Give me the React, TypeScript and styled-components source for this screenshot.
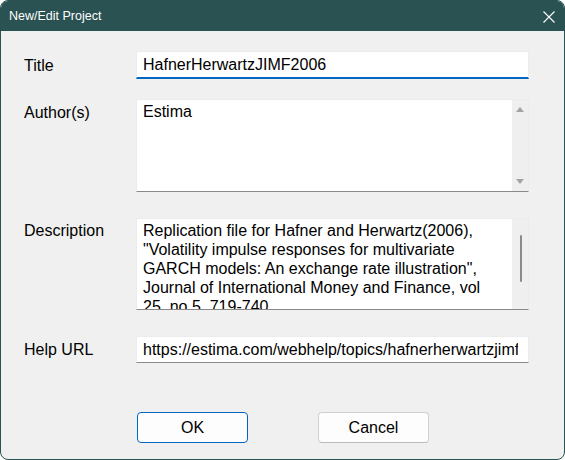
import styled, { createGlobalStyle } from 'styled-components'

const GlobalStyle = createGlobalStyle`
  html, body {
    margin: 0;
    padding: 0;
    background: #ffffff;
  }
  * {
    box-sizing: border-box;
  }
`

const SWindow = styled.div`
  width: 565px;
  height: 460px;
  border: 1px solid #2a5252;
  border-radius: 8px;
  overflow: hidden;
  background: #f0f0f0;
  display: flex;
  flex-direction: column;
  font-family: 'Liberation Sans', Arial, sans-serif;
  color: #000;
`

const STitleBar = styled.div`
  height: 30px;
  flex: none;
  background: #2a5252;
  display: flex;
  align-items: center;
  justify-content: space-between;
  padding: 0 9px 0 8px;
  color: #ffffff;
  font-size: 12.5px;
`

const SCloseIcon = styled.svg`
  width: 12px;
  height: 12px;
  display: block;
  margin-top: 1px;
`

const SBody = styled.div`
  flex: 1;
  padding: 20px 35px 0 23px;
  display: flex;
  flex-direction: column;
`

const SRow = styled.div<{ $gap: number; $center?: boolean }>`
  display: grid;
  grid-template-columns: 112px 1fr;
  align-items: ${(p) => (p.$center ? 'center' : 'start')};
  margin-top: ${(p) => p.$gap}px;
`

const SLabel = styled.div<{ $top?: number }>`
  font-size: 16px;
  line-height: 19px;
  padding-top: ${(p) => p.$top ?? 0}px;
`

const SLineInput = styled.input<{ $focused?: boolean; $right?: number }>`
  display: block;
  width: 100%;
  height: ${(p) => (p.$focused ? 28 : 27)}px;
  margin: 0;
  padding: 0 ${(p) => p.$right ?? 1}px 0 6px;
  border: 1px solid #ececec;
  border-bottom: ${(p) => (p.$focused ? '2px solid #0067c0' : '1px solid #8a8a8a')};
  background: #ffffff;
  font-family: 'Liberation Sans', Arial, sans-serif;
  font-size: 16px;
  line-height: 19px;
  color: #000;
  outline: none;
`

const SMultiBox = styled.div<{ $height: number }>`
  height: ${(p) => p.$height}px;
  display: flex;
  background: #ffffff;
  border: 1px solid #ececec;
  border-bottom: 1px solid #8a8a8a;
  overflow: hidden;
`

const SMultiText = styled.div<{ $right?: number }>`
  flex: 1;
  padding: 2px ${(p) => p.$right ?? 4}px 0 6px;
  font-size: 16px;
  line-height: 19px;
  overflow: hidden;
`

const SScrollTrack = styled.div`
  width: 16px;
  flex: none;
  background: #efefef;
  display: flex;
  flex-direction: column;
  align-items: center;
`

const SArrowSpacer = styled.div`
  flex: 1;
`

const SArrowIcon = styled.svg<{ $edge: 'top' | 'bottom' }>`
  width: 8px;
  height: 5px;
  display: block;
  margin: ${(p) => (p.$edge === 'top' ? '7px 0 0' : '0 0 7px')};
`

const SThumb = styled.div`
  width: 2px;
  height: 47px;
  margin-top: 16px;
  margin-left: 1px;
  border-radius: 1px;
  background: #8a8a8a;
`

const SButtons = styled.div`
  display: flex;
  gap: 70px;
  margin-top: 49px;
  padding-left: 113px;
`

const SButton = styled.button<{ $primary?: boolean }>`
  width: 111px;
  height: 31px;
  margin: 0;
  padding: 0;
  border: 1px solid ${(p) => (p.$primary ? '#0067c0' : '#d0d0d0')};
  border-bottom-color: ${(p) => (p.$primary ? '#0067c0' : '#bcbcbc')};
  border-radius: 4px;
  background: #fdfdfd;
  font-family: 'Liberation Sans', Arial, sans-serif;
  font-size: 16px;
  color: #000;
`

const description =
  'Replication file for Hafner and Herwartz(2006), "Volatility impulse responses for multivariate GARCH models: An exchange rate illustration", Journal of International Money and Finance, vol 25, no 5, 719-740.'

const App = () => {
  return (
    <>
      <GlobalStyle />
      <SWindow>
        <STitleBar>
          <span>New/Edit Project</span>
          <SCloseIcon viewBox="0 0 12 12">
            <path d="M0.5 0.5 L11.5 11.5 M11.5 0.5 L0.5 11.5" stroke="#ffffff" strokeWidth="1.1" fill="none" />
          </SCloseIcon>
        </STitleBar>
        <SBody>
          <SRow $gap={0} $center>
            <SLabel>Title</SLabel>
            <SLineInput $focused readOnly value="HafnerHerwartzJIMF2006" />
          </SRow>

          <SRow $gap={20}>
            <SLabel $top={4}>Author(s)</SLabel>
            <SMultiBox $height={93}>
              <SMultiText>Estima</SMultiText>
              <SScrollTrack>
                <SArrowIcon $edge="top" viewBox="0 0 8 5">
                  <path d="M4 0 L8 5 L0 5 Z" fill="#a3a3a3" />
                </SArrowIcon>
                <SArrowSpacer />
                <SArrowIcon $edge="bottom" viewBox="0 0 8 5">
                  <path d="M0 0 L8 0 L4 5 Z" fill="#a3a3a3" />
                </SArrowIcon>
              </SScrollTrack>
            </SMultiBox>
          </SRow>

          <SRow $gap={26}>
            <SLabel $top={3}>Description</SLabel>
            <SMultiBox $height={92}>
              <SMultiText $right={24}>{description}</SMultiText>
              <SScrollTrack>
                <SThumb />
              </SScrollTrack>
            </SMultiBox>
          </SRow>

          <SRow $gap={26} $center>
            <SLabel>Help URL</SLabel>
            <SLineInput
              readOnly
              $right={10}
              value="https://estima.com/webhelp/topics/hafnerherwartzjimf2006.htm"
            />
          </SRow>

          <SButtons>
            <SButton $primary>OK</SButton>
            <SButton>Cancel</SButton>
          </SButtons>
        </SBody>
      </SWindow>
    </>
  )
}

export default App
